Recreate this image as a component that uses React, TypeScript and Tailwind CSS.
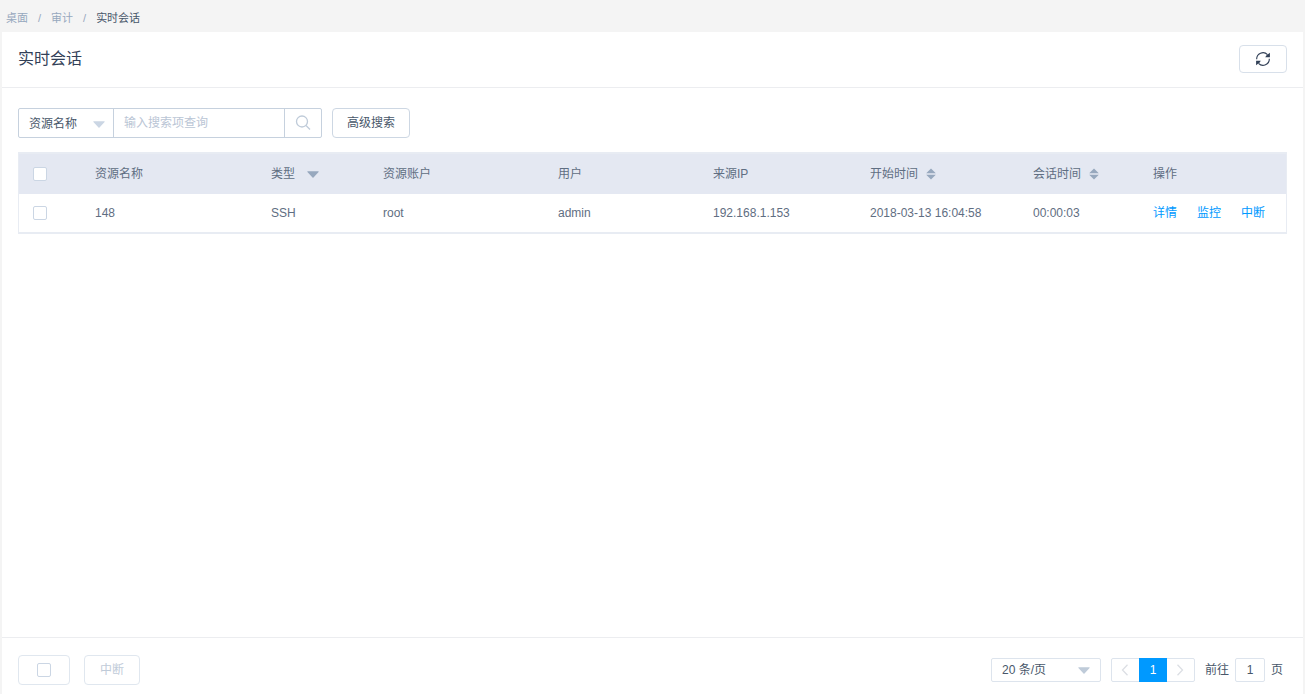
import { ReactNode } from "react";

const sessions = [
  {
    name: "148",
    type: "SSH",
    account: "root",
    user: "admin",
    ip: "192.168.1.153",
    start: "2018-03-13 16:04:58",
    duration: "00:00:03",
  },
];

const actions = ["详情", "监控", "中断"];

function Caret({ className }: { className: string }) {
  return (
    <svg className={className} width="12" height="7" viewBox="0 0 12 7" aria-hidden="true">
      <path d="M0.8 0.3h10.4c.5 0 .7.5.4.8L6.5 6.6a.7.7 0 0 1-1 0L.4 1.1C.1.8.3.3.8.3z" fill="currentColor" />
    </svg>
  );
}

function SortIcon() {
  return (
    <svg width="10" height="12" viewBox="0 0 10 12" className="text-[#97a8be]" aria-hidden="true">
      <path d="M5 0.500 9.800 5.200H0.200zM5 11.500 0.200 6.800H9.800z" fill="currentColor" />
    </svg>
  );
}

function RefreshIcon() {
  return (
    <svg width="16" height="16" viewBox="0 0 16 16" fill="none" stroke="currentColor" strokeWidth="1.1" aria-hidden="true">
      <path d="M1.700 8.300A6.300 6.300 0 0 1 12.500 3.600M14.300 7.700A6.300 6.300 0 0 1 3.500 12.400" />
      <path d="M14.900 1.800V6.200H10.200L11.500 4.200 13 3.200zM1.100 14.200V9.800H5.800L4.500 11.800 3 12.800z" fill="currentColor" stroke="none" />
    </svg>
  );
}

function Chevron({ left }: { left?: boolean }) {
  return (
    <svg width="8" height="12" viewBox="0 0 8 12" fill="none" stroke="currentColor" strokeWidth="1.3" aria-hidden="true">
      <path d={left ? "M6.500 0.800 1.500 6l5 5.200" : "M1.500 0.800 6.500 6l-5 5.200"} />
    </svg>
  );
}

function Checkbox({ label, disabled }: { label: string; disabled?: boolean }) {
  return (
    <input
      type="checkbox"
      aria-label={label}
      disabled={disabled}
      className="block size-3.5 appearance-none rounded-xs border border-[#cbd6e4] bg-white checked:bg-[#0099ff]"
    />
  );
}

function Th({ children }: { children: ReactNode }) {
  return (
    <th className="pl-3 text-left font-normal">
      <div className="flex items-center">{children}</div>
    </th>
  );
}

export default function App() {
  return (
    <div className="flex min-h-screen flex-col bg-white pb-0.5 font-['Liberation_Sans','Noto_Sans_CJK_SC',sans-serif] text-xs text-[#5f6e82]">
      <div className="flex flex-1 flex-col bg-[#f4f4f4] px-0.5">
        <nav className="flex h-8 items-center gap-2.5 px-1 pt-1 text-[11px] text-[#97a8be]">
          <a href="#desktop">桌面</a>
          <span>/</span>
          <a href="#audit">审计</a>
          <span>/</span>
          <span className="text-[#48576a]">实时会话</span>
        </nav>

        <main className="flex flex-1 flex-col bg-white">
          <header className="flex h-14 items-center justify-between border-b border-[#ecedf0] px-4 pb-px">
            <h1 className="text-base text-[#324057]">实时会话</h1>
            <button aria-label="刷新" className="flex h-7 w-12 items-center justify-center rounded-sm border border-[#d8e0ea] text-[#324057]">
              <RefreshIcon />
            </button>
          </header>

          <section className="flex-1 px-4 pt-5">
            <div className="flex gap-2.5">
              <div className="flex h-[30px] w-[304px] rounded-xs border border-[#c6d1de]">
                <div className="relative w-[95px] border-r border-[#c6d1de]">
                  <select aria-label="搜索字段" className="h-full w-full appearance-none pt-0.5 pl-2.5 text-[#48576a]">
                    <option>资源名称</option>
                  </select>
                  <Caret className="pointer-events-none absolute top-3 right-2 text-[#cbd6e4]" />
                </div>
                <input aria-label="搜索内容" placeholder="输入搜索项查询" className="min-w-0 flex-1 px-2.5 placeholder:text-[#bac5d5]" />
                <button aria-label="搜索" className="flex w-[37px] items-center justify-center border-l border-[#c6d1de] text-[#bfcbd9]">
                  <svg width="16" height="16" viewBox="0 0 16 16" fill="none" stroke="currentColor" strokeWidth="1.3" aria-hidden="true">
                    <circle cx="7" cy="6.500" r="5.500" />
                    <path d="m11 10.500 4 4" />
                  </svg>
                </button>
              </div>
              <button className="h-[30px] w-[78px] rounded-sm border border-[#cdd7e3] text-[#48576a]">高级搜索</button>
            </div>

            <div className="mt-3.5 border border-t-2 border-b-2 border-[#e8ecf3]">
              <table className="w-full table-fixed">
                <colgroup>
                  <col className="w-[64px]" />
                  <col className="w-[176px]" />
                  <col className="w-[112px]" />
                  <col className="w-[175px]" />
                  <col className="w-[155px]" />
                  <col className="w-[157px]" />
                  <col className="w-[163px]" />
                  <col className="w-[120px]" />
                  <col className="w-[145px]" />
                </colgroup>
                <thead>
                  <tr className="h-10 bg-[#e4e8f2]">
                    <th className="pl-3.5">
                      <Checkbox label="全选" />
                    </th>
                    <Th>资源名称</Th>
                    <Th>
                      类型
                      <Caret className="ml-3 text-[#97a8be]" />
                    </Th>
                    <Th>资源账户</Th>
                    <Th>用户</Th>
                    <Th>来源IP</Th>
                    <Th>
                      <button className="flex items-center gap-2">
                        开始时间
                        <SortIcon />
                      </button>
                    </Th>
                    <Th>
                      <button className="flex items-center gap-2">
                        会话时间
                        <SortIcon />
                      </button>
                    </Th>
                    <Th>操作</Th>
                  </tr>
                </thead>
                <tbody>
                  {sessions.map((s) => (
                    <tr key={s.name} className="h-[38px]">
                      <td className="pl-3.5">
                        <Checkbox label={`选择 ${s.name}`} />
                      </td>
                      <td className="pl-3">{s.name}</td>
                      <td className="pl-3">{s.type}</td>
                      <td className="pl-3">{s.account}</td>
                      <td className="pl-3">{s.user}</td>
                      <td className="pl-3">{s.ip}</td>
                      <td className="pl-3">{s.start}</td>
                      <td className="pl-3">{s.duration}</td>
                      <td className="pl-3">
                        <div className="flex gap-5 text-[#0099ff]">
                          {actions.map((a) => (
                            <a key={a} href="#session">
                              {a}
                            </a>
                          ))}
                        </div>
                      </td>
                    </tr>
                  ))}
                </tbody>
              </table>
            </div>
          </section>

          <footer className="flex h-[57px] items-center justify-between border-t border-[#ecedf0] pt-2 pr-5 pl-4">
            <div className="flex gap-3.5">
              <div className="flex h-[30px] w-[52px] items-center justify-center rounded-sm border border-[#e0e7ef]">
                <Checkbox label="选择全部会话" />
              </div>
              <button disabled className="h-[30px] w-14 rounded-sm border border-[#e0e7ef] text-[#bfcbd9]">
                中断
              </button>
            </div>

            <div className="flex items-center gap-2.5">
              <div className="relative h-6 w-[110px] rounded-xs border border-[#dde4ed]">
                <select aria-label="每页条数" className="h-full w-full appearance-none pl-2.5 text-[#48576a]">
                  <option>20 条/页</option>
                </select>
                <Caret className="pointer-events-none absolute top-2 right-2.5 text-[#bfcbd9]" />
              </div>
              <div className="flex h-6 w-[84px] rounded-xs border border-[#dde4ed] text-[#dcdfe4]">
                <button disabled aria-label="上一页" className="flex flex-1 items-center justify-center">
                  <Chevron left />
                </button>
                <button className="-my-px w-7 bg-[#0099ff] text-white">1</button>
                <button disabled aria-label="下一页" className="flex flex-1 items-center justify-center">
                  <Chevron />
                </button>
              </div>
              <label className="flex items-center gap-1.5 text-[#48576a]">
                前往
                <input defaultValue="1" className="h-6 w-[30px] rounded-xs border border-[#dde4ed] text-center" />
                页
              </label>
            </div>
          </footer>
        </main>
      </div>
    </div>
  );
}
